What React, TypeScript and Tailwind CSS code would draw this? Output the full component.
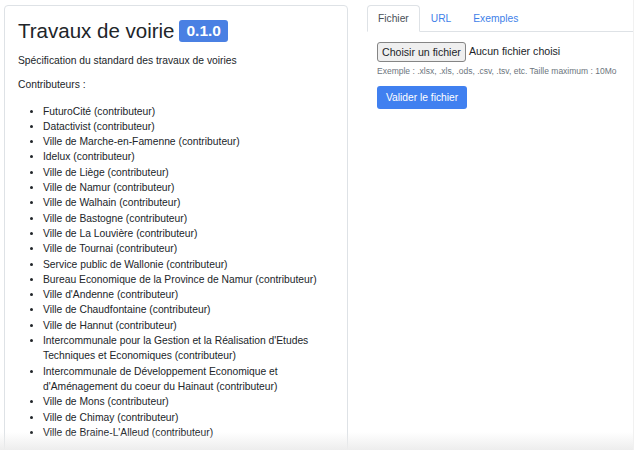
const contributors = [
  "FuturoCité",
  "Datactivist",
  "Ville de Marche-en-Famenne",
  "Idelux",
  "Ville de Liège",
  "Ville de Namur",
  "Ville de Walhain",
  "Ville de Bastogne",
  "Ville de La Louvière",
  "Ville de Tournai",
  "Service public de Wallonie",
  "Bureau Economique de la Province de Namur",
  "Ville d'Andenne",
  "Ville de Chaudfontaine",
  "Ville de Hannut",
  "Intercommunale pour la Gestion et la Réalisation d'Etudes Techniques et Economiques",
  "Intercommunale de Développement Economique et d'Aménagement du coeur du Hainaut",
  "Ville de Mons",
  "Ville de Chimay",
  "Ville de Braine-L'Alleud",
];

const tabs = ["Fichier", "URL", "Exemples"];

export default function App() {
  return (
    <div
      className="relative w-[640px] h-[457px] bg-white text-[#212529] overflow-hidden"
      style={{ fontFamily: '"Liberation Sans", Arial, Helvetica, sans-serif' }}
    >
      <div className="relative flex w-[634px] h-[450px] overflow-hidden border-r border-[#f1f1f1] pl-[4px] pt-[5px]">
        {/* left: schema card */}
        <div className="w-[344px] shrink-0 border border-[#dee2e6] rounded-[4px] px-[13px] pt-[13px] h-[600px]">
          <h2 className="flex items-center gap-[5px] text-[20.5px] leading-[24px] font-normal mb-[10px]">
            <span>Travaux de voirie</span>
            <span className="bg-[#4a80e3] text-white font-bold text-[15.5px] leading-[16px] px-[7px] py-[3px] rounded-[3px]">
              0.1.0
            </span>
          </h2>
          <p className="text-[10.3px] leading-[15.3px] mb-[9px]">Spécification du standard des travaux de voiries</p>
          <p className="text-[10.3px] leading-[15.3px] mb-[11px]">Contributeurs :</p>
          <ul className="list-disc pl-[25px] text-[10.3px] leading-[15.3px] pr-[8px]">
            {contributors.map((name) => (
              <li key={name}>{name} (contributeur)</li>
            ))}
          </ul>
        </div>

        {/* right: validation form */}
        <div className="w-[266px] ml-[19px] shrink-0">
          <ul className="flex border-b border-[#dee2e6] text-[10.25px] leading-[15.3px]">
            {tabs.map((tab, i) => (
              <li key={tab} className="-mb-px">
                <button
                  className={`px-[10px] py-[5px] rounded-t-[4px] border ${
                    i === 0 ? "border-[#dee2e6] border-b-white bg-white text-[#495057]" : "border-transparent text-[#3f7fe9]"
                  }`}
                >
                  {tab}
                </button>
              </li>
            ))}
          </ul>
          <div className="px-[10px] pt-[10px]">
            <div className="flex items-center gap-[3px] text-[10.6px]">
              <span className="bg-[#efefef] border border-[#858585] rounded-[3px] px-[4px] h-[20px] leading-[18px]">
                Choisir un fichier
              </span>
              <span>Aucun fichier choisi</span>
            </div>
            <p className="text-[8.5px] leading-[12px] text-[#6c757d] mt-[3px]">
              Exemple : .xlsx, .xls, .ods, .csv, .tsv, etc. Taille maximum : 10Mo
            </p>
            <button className="mt-[9px] bg-[#4080f0] text-white text-[10.25px] leading-[15px] px-[9px] py-[4px] rounded-[3px]">
              Valider le fichier
            </button>
          </div>
        </div>

        <div className="absolute left-0 right-0 bottom-0 h-[18px] bg-gradient-to-b from-white/0 to-[#ededed]" />
      </div>
    </div>
  );
}
